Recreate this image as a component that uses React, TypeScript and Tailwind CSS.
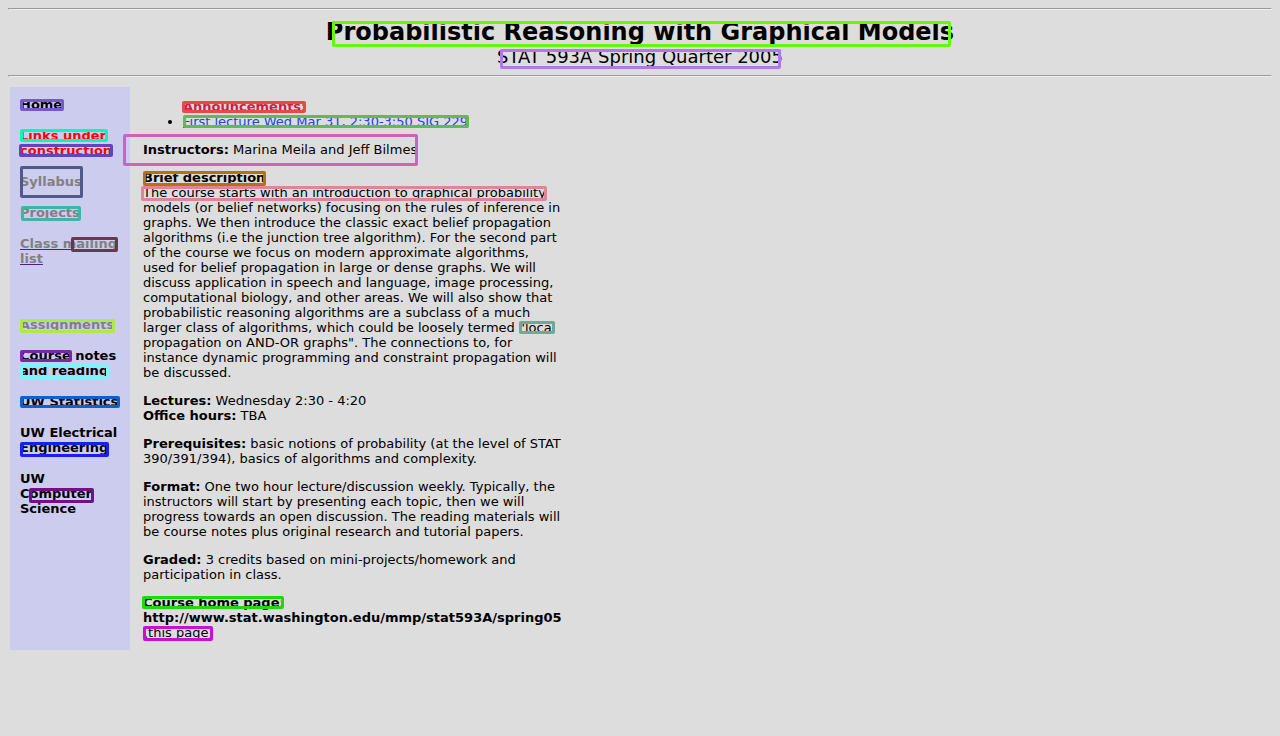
import type { ReactNode } from "react";

type NavItem = { label: string; className?: string };

const primaryLinks: NavItem[] = [
  { label: "Home" },
  { label: "Links under construction", className: "text-[#ff0000]" },
  { label: "Syllabus", className: "text-[#808080]" },
  { label: "Projects", className: "text-[#808080]" },
  {
    label: "Class mailing list",
    className: "text-[#808080] underline decoration-[#551a8b]",
  },
];

const secondaryLinks: NavItem[] = [
  { label: "Assignments", className: "text-[#808080]" },
  { label: "Course notes and reading" },
  { label: "UW Statistics" },
  { label: "UW Electrical Engineering" },
  { label: "UW Computer Science" },
];

// Highlight frames drawn over the page; heading frames follow the centred text.
const highlights = [
  "left-[calc(50%-308px)] top-[21px] w-[619px] h-[26px] border-[#63f80d]",
  "left-[calc(50%-140px)] top-[49px] w-[281px] h-[20px] border-[#ae7aea]",
  "left-[20px] top-[99px] w-[44px] h-[12px] border-[#7559cd]",
  "left-[20px] top-[129px] w-[88px] h-[13px] border-[#06f9b6]",
  "left-[19px] top-[144px] w-[94px] h-[13px] border-[#6144c0]",
  "left-[20px] top-[166px] w-[63px] h-[32px] border-[#53588a]",
  "left-[21px] top-[206px] w-[60px] h-[15px] border-[#3eb5a5]",
  "left-[71px] top-[237px] w-[47px] h-[15px] border-[#6a3753]",
  "left-[20px] top-[319px] w-[95px] h-[14px] border-[#adea47]",
  "left-[20px] top-[350px] w-[52px] h-[12px] border-[#7729a5]",
  "left-[20px] top-[364px] w-[89px] h-[15px] border-[#7ff2fd]",
  "left-[20px] top-[396px] w-[100px] h-[12px] border-[#0e60cf]",
  "left-[20px] top-[442px] w-[89px] h-[15px] border-[#1521ee]",
  "left-[29px] top-[488px] w-[65px] h-[15px] border-[#740f88]",
  "left-[182px] top-[101px] w-[124px] h-[12px] border-[#e34c45]",
  "left-[183px] top-[115px] w-[286px] h-[13px] border-[#65b951]",
  "left-[123px] top-[134px] w-[295px] h-[32px] border-[#cd63c0]",
  "left-[143px] top-[171px] w-[123px] h-[15px] border-[#b27210]",
  "left-[141px] top-[186px] w-[406px] h-[15px] border-[#e08498]",
  "left-[519px] top-[321px] w-[36px] h-[13px] border-[#66ad94]",
  "left-[142px] top-[596px] w-[142px] h-[13px] border-[#1bdb0c]",
  "left-[143px] top-[626px] w-[70px] h-[15px] border-[#c811cf]",
];

function Rule() {
  return (
    <hr className="h-0.5 border border-t-[#9a9a9a] border-r-[#eeeeee] border-b-[#eeeeee] border-l-[#9a9a9a]" />
  );
}

function NavGroup({ items }: { items: NavItem[] }) {
  return (
    <ul className="flex flex-col gap-4">
      {items.map((item) => (
        <li key={item.label}>
          <a href="#" className={item.className}>
            {item.label}
          </a>
        </li>
      ))}
    </ul>
  );
}

function Entry({ title, children }: { title: string; children: ReactNode }) {
  return (
    <p>
      <b>{title}</b> {children}
    </p>
  );
}

export default function App() {
  return (
    <div className="relative min-h-screen bg-[#dddddd] p-2 font-['DejaVu_Sans',sans-serif] text-[13px] leading-[15px] text-black">
      <Rule />
      <header className="py-2 text-center">
        <h1 className="text-2xl leading-7 font-bold">
          Probabilistic Reasoning with Graphical Models
        </h1>
        <p className="text-lg leading-[21px]">STAT 593A Spring Quarter 2005</p>
      </header>
      <Rule />

      <div className="mt-2 flex p-0.5">
        <nav className="flex w-[120px] shrink-0 flex-col gap-[51px] bg-[#ccccee] p-2.5 font-bold">
          <NavGroup items={primaryLinks} />
          <NavGroup items={secondaryLinks} />
        </nav>

        <main className="flex max-w-[445px] flex-col gap-[13px] px-[13px] pt-3 pb-2.5">
          <section className="pl-10">
            <h2 className="font-bold text-[#cc1f4a]">Announcements:</h2>
            <ul className="list-disc">
              <li>
                <a href="#" className="text-[#2244dd] underline">
                  First lecture Wed Mar 31, 2:30-3:50 SIG 229
                </a>
              </li>
            </ul>
          </section>

          <Entry title="Instructors:">Marina Meila and Jeff Bilmes</Entry>

          <section>
            <h2 className="font-bold">Brief description</h2>
            <p>
              The course starts with an introduction to graphical probability
              models (or belief networks) focusing on the rules of inference in
              graphs. We then introduce the classic exact belief propagation
              algorithms (i.e the junction tree algorithm). For the second part
              of the course we focus on modern approximate algorithms, used for
              belief propagation in large or dense graphs. We will discuss
              application in speech and language, image processing,
              computational biology, and other areas. We will also show that
              probabilistic reasoning algorithms are a subclass of a much larger
              class of algorithms, which could be loosely termed "local
              propagation on AND-OR graphs". The connections to, for instance
              dynamic programming and constraint propagation will be discussed.
            </p>
          </section>

          <div>
            <Entry title="Lectures:">Wednesday 2:30 - 4:20</Entry>
            <Entry title="Office hours:">TBA</Entry>
          </div>

          <Entry title="Prerequisites:">
            basic notions of probability (at the level of STAT 390/391/394),
            basics of algorithms and complexity.
          </Entry>

          <Entry title="Format:">
            One two hour lecture/discussion weekly. Typically, the instructors
            will start by presenting each topic, then we will progress towards
            an open discussion. The reading materials will be course notes plus
            original research and tutorial papers.
          </Entry>

          <Entry title="Graded:">
            3 credits based on mini-projects/homework and participation in
            class.
          </Entry>

          <Entry title="Course home page:">
            <b>http://www.stat.washington.edu/mmp/stat593A/spring05</b> (this
            page)
          </Entry>
        </main>
      </div>

      {highlights.map((frame) => (
        <div
          key={frame}
          aria-hidden="true"
          className={`pointer-events-none absolute rounded-xs border-3 ${frame}`}
        />
      ))}
    </div>
  );
}
